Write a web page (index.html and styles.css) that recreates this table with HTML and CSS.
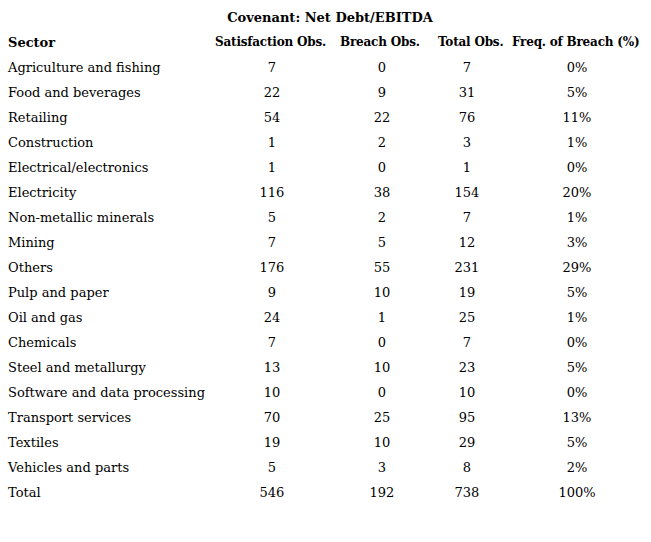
FILE: index.html
```html
<!DOCTYPE html>
<html>
<head>
<meta charset="utf-8">
<link rel="stylesheet" href="styles.css">
</head>
<body>
<div class="table">
  <div class="title">Covenant: Net Debt/EBITDA</div>
  <div class="head">
    <div>Sector</div>
    <div>Satisfaction Obs.</div>
    <div>Breach Obs.</div>
    <div>Total Obs.</div>
    <div>Freq. of Breach (%)</div>
  </div>
  <div class="row"><div>Agriculture and fishing</div><div class="n">7</div><div class="n">0</div><div class="n">7</div><div class="n p">0%</div></div>
  <div class="row"><div>Food and beverages</div><div class="n">22</div><div class="n">9</div><div class="n">31</div><div class="n p">5%</div></div>
  <div class="row"><div>Retailing</div><div class="n">54</div><div class="n">22</div><div class="n">76</div><div class="n p">11%</div></div>
  <div class="row"><div>Construction</div><div class="n">1</div><div class="n">2</div><div class="n">3</div><div class="n p">1%</div></div>
  <div class="row"><div>Electrical/electronics</div><div class="n">1</div><div class="n">0</div><div class="n">1</div><div class="n p">0%</div></div>
  <div class="row"><div>Electricity</div><div class="n">116</div><div class="n">38</div><div class="n">154</div><div class="n p">20%</div></div>
  <div class="row"><div>Non-metallic minerals</div><div class="n">5</div><div class="n">2</div><div class="n">7</div><div class="n p">1%</div></div>
  <div class="row"><div>Mining</div><div class="n">7</div><div class="n">5</div><div class="n">12</div><div class="n p">3%</div></div>
  <div class="row"><div>Others</div><div class="n">176</div><div class="n">55</div><div class="n">231</div><div class="n p">29%</div></div>
  <div class="row"><div>Pulp and paper</div><div class="n">9</div><div class="n">10</div><div class="n">19</div><div class="n p">5%</div></div>
  <div class="row"><div>Oil and gas</div><div class="n">24</div><div class="n">1</div><div class="n">25</div><div class="n p">1%</div></div>
  <div class="row"><div>Chemicals</div><div class="n">7</div><div class="n">0</div><div class="n">7</div><div class="n p">0%</div></div>
  <div class="row"><div>Steel and metallurgy</div><div class="n">13</div><div class="n">10</div><div class="n">23</div><div class="n p">5%</div></div>
  <div class="row"><div>Software and data processing</div><div class="n">10</div><div class="n">0</div><div class="n">10</div><div class="n p">0%</div></div>
  <div class="row"><div>Transport services</div><div class="n">70</div><div class="n">25</div><div class="n">95</div><div class="n p">13%</div></div>
  <div class="row"><div>Textiles</div><div class="n">19</div><div class="n">10</div><div class="n">29</div><div class="n p">5%</div></div>
  <div class="row"><div>Vehicles and parts</div><div class="n">5</div><div class="n">3</div><div class="n">8</div><div class="n p">2%</div></div>
  <div class="row"><div>Total</div><div class="n">546</div><div class="n">192</div><div class="n">738</div><div class="n p">100%</div></div>
</div>
</body>
</html>
```
FILE: styles.css
```css
html, body {
  margin: 0;
  padding: 0;
  background: #ffffff;
}
body {
  font-family: "DejaVu Serif", "Liberation Serif", serif;
  font-size: 13px;
  color: #000000;
}
.table {
  padding: 5px 8px 0 8px;
  width: 635px;
}
.title {
  font-weight: bold;
  text-align: center;
  line-height: 25px;
  height: 25px;
  padding-left: 9px;
  white-space: nowrap;
}
.head {
  display: grid;
  grid-template-columns: 207px 125px 98px 74px 131px;
  font-weight: bold;
  font-size: 12px;
  letter-spacing: -0.2px;
  line-height: 25px;
  height: 25px;
  white-space: nowrap;
}
.head > div:first-child {
  font-size: 13px;
  letter-spacing: 0;
}
.row {
  display: grid;
  grid-template-columns: 209px 110px 110px 60px 146px;
  line-height: 25px;
  height: 25px;
  white-space: nowrap;
}
.n {
  text-align: center;
}
.p {
  padding-left: 14px;
}
```
